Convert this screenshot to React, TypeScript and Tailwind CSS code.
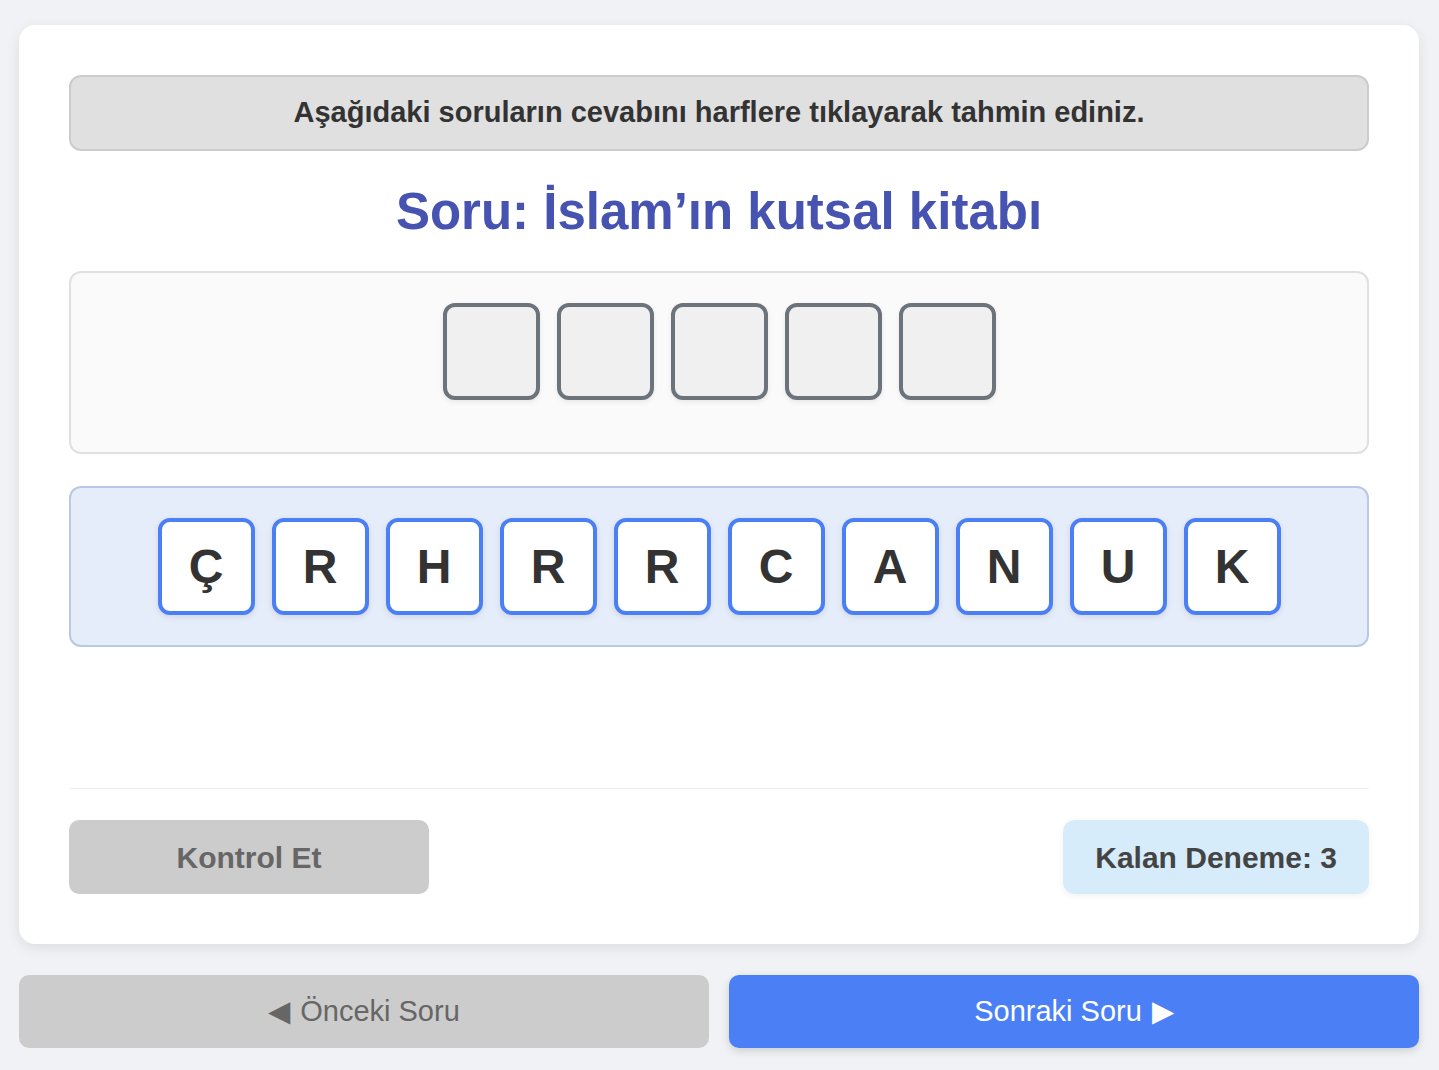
import React from "react";

const ANSWER_LENGTH = 5;
const LETTERS = ["Ç", "R", "H", "R", "R", "C", "A", "N", "U", "K"];

export default function App() {
  return (
    <div className="min-h-screen bg-[#f0f2f5] pl-[19px] pr-[20px] pt-[25px] pb-[23px] font-['Liberation_Sans',Arial,sans-serif]">
      <div className="rounded-[16px] bg-white p-[50px] shadow-[0_4px_14px_rgba(0,0,0,0.09)]">
        {/* Instruction */}
        <div className="flex h-[76px] items-center justify-center rounded-[12px] border-2 border-[#cccccc] bg-[#e0e0e0] text-[29px] font-bold text-[#333333]">
          Aşağıdaki soruların cevabını harflere tıklayarak tahmin ediniz.
        </div>

        {/* Question */}
        <div className="flex h-[120px] items-center justify-center">
          <h2 className="text-[51px] font-bold leading-none text-[#4753b1]">
            Soru: İslam’ın kutsal kitabı
          </h2>
        </div>

        {/* Answer slots */}
        <div className="flex h-[183px] justify-center gap-[17px] rounded-[12px] border-2 border-[#e0e0e0] bg-[#fafafa] pt-[30px]">
          {Array.from({ length: ANSWER_LENGTH }).map((_, i) => (
            <div
              key={i}
              className="h-[97px] w-[97px] rounded-[12px] border-4 border-[#6c737b] bg-[#f0f0f0] shadow-[0_2px_5px_rgba(0,0,0,0.08)]"
            />
          ))}
        </div>

        {/* Letter pool */}
        <div className="mt-[32px] flex h-[161px] items-center justify-center gap-[17px] rounded-[12px] border-2 border-[#b9c8e3] bg-[#e6edfa]">
          {LETTERS.map((l, i) => (
            <button
              key={i}
              type="button"
              className="flex h-[97px] w-[97px] items-center justify-center rounded-[12px] border-4 border-[#4a7ff5] bg-white text-[48px] font-bold text-[#333333] shadow-[0_2px_6px_rgba(0,0,0,0.1)]"
            >
              {l}
            </button>
          ))}
        </div>

        <div className="h-[141px]" />

        {/* Footer */}
        <div className="flex items-center justify-between border-t border-[#eeeeee] pt-[31px]">
          <button
            type="button"
            className="flex h-[74px] w-[360px] items-center justify-center rounded-[10px] bg-[#cccccc] text-[30px] font-bold text-[#666666]"
          >
            Kontrol Et
          </button>
          <div className="flex h-[74px] items-center rounded-[12px] bg-[#d7ecfb] px-[32px] text-[30px] font-bold text-[#444444] shadow-[0_2px_6px_rgba(0,0,0,0.06)]">
            Kalan Deneme: 3
          </div>
        </div>
      </div>

      {/* Navigation */}
      <div className="mt-[31px] grid grid-cols-2 gap-[20px]">
        <button
          type="button"
          className="flex h-[73px] items-center justify-center gap-[10px] rounded-[10px] bg-[#cccccc] text-[29px] text-[#666666]"
        >
          <span>◀</span>
          <span>Önceki Soru</span>
        </button>
        <button
          type="button"
          className="flex h-[73px] items-center justify-center gap-[10px] rounded-[10px] bg-[#4a7ff5] text-[29px] text-white shadow-[0_3px_8px_rgba(0,0,0,0.15)]"
        >
          <span>Sonraki Soru</span>
          <span>▶</span>
        </button>
      </div>
    </div>
  );
}
